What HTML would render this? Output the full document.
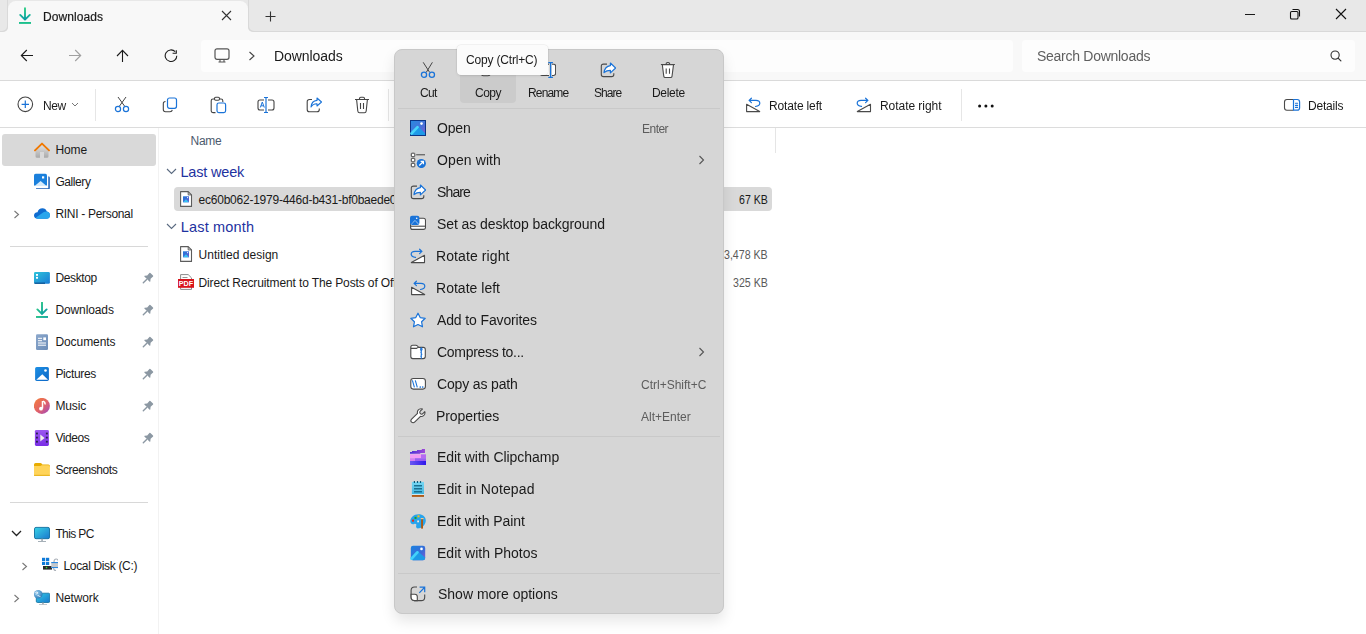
<!DOCTYPE html>
<html><head><meta charset="utf-8"><style>
html,body{margin:0;padding:0;width:1366px;height:634px;overflow:hidden;background:#fff;font-family:"Liberation Sans", sans-serif;}
.t{position:absolute;white-space:nowrap;}
.r{position:absolute;}
</style></head><body>
<div class="r" style="left:0px;top:0px;width:1366px;height:32px;background:#f8f8f8;"></div><div class="r" style="left:0px;top:0px;width:1366px;height:1px;background:#e8e8e8;"></div><div class="r" style="left:0px;top:0px;width:8px;height:32px;background:#e8e8e8;border-bottom-right-radius:5px;box-shadow:inset -1px -1px 0 #d9d9d9"></div><div class="r" style="left:248px;top:0px;width:1118px;height:32px;background:#e8e8e8;border-bottom-left-radius:5px;box-shadow:inset 1px -1px 0 #d9d9d9"></div><div class="r" style="left:8px;top:1px;width:240px;height:31px;background:#f8f8f8;border-radius:8px 8px 0 0"></div><div class="r" style="left:8px;top:1px;width:7px;height:7px;background:#e8e8e8;z-index:0"></div><div class="r" style="left:241px;top:1px;width:7px;height:7px;background:#e8e8e8;z-index:0"></div><div class="r" style="left:8px;top:1px;width:240px;height:31px;background:#f8f8f8;border-radius:8px 8px 0 0"></div><svg class="r" style="left:18px;top:7px" width="14" height="18" viewBox="0 0 14 18"><defs><linearGradient id="dg" x1="0" y1="0" x2="0" y2="1"><stop offset="0" stop-color="#2ccc84"/><stop offset="0.6" stop-color="#18b49a"/><stop offset="1" stop-color="#0a9aa2"/></linearGradient></defs><path d="M7 1.2 V12.6 M2.2 7.9 L7 12.7 L11.8 7.9" stroke="url(#dg)" stroke-width="1.9" fill="none" stroke-linecap="round" stroke-linejoin="round"/><rect x="1" y="15" width="12" height="1.9" fill="#1cc08c"/></svg><div class="t" style="left:43.30px;top:7.00px;font-size:12px;line-height:20px;color:#1a1a1a;letter-spacing:0.092px;-webkit-text-stroke:0.2px #1a1a1a;will-change:transform;">Downloads</div><svg class="r" style="left:221px;top:10px" width="11" height="11" viewBox="0 0 11 11"><path d="M1 1 L10 10 M10 1 L1 10" stroke="#333" stroke-width="1.1"/></svg><svg class="r" style="left:265px;top:11px" width="11" height="11" viewBox="0 0 11 11"><path d="M5.5 0.5 V10.5 M0.5 5.5 H10.5" stroke="#333" stroke-width="1.1"/></svg><div class="r" style="left:1245px;top:14px;width:10px;height:1px;background:#1a1a1a;"></div><svg class="r" style="left:1289px;top:8px" width="12" height="12" viewBox="0 0 12 12"><rect x="1.5" y="3.5" width="7.5" height="7.5" rx="1.3" fill="none" stroke="#111" stroke-width="1.1"/><path d="M3.5 1.5 H8.5 Q10.5 1.5 10.5 3.5 V8.5" fill="none" stroke="#111" stroke-width="1.1"/></svg><svg class="r" style="left:1335px;top:8px" width="12" height="12" viewBox="0 0 12 12"><path d="M1 1 L11 11 M11 1 L1 11" stroke="#111" stroke-width="1.1"/></svg><div class="r" style="left:0px;top:32px;width:1366px;height:48px;background:#f8f8f8;"></div><div class="r" style="left:0px;top:80px;width:1366px;height:1px;background:#dadada;"></div><svg class="r" style="left:20px;top:49px" width="14" height="13" viewBox="0 0 14 13"><path d="M13 6.5 H1.5 M6.8 1 L1.3 6.5 L6.8 12" stroke="#1a1a1a" stroke-width="1.1" fill="none"/></svg><svg class="r" style="left:68px;top:49px" width="14" height="13" viewBox="0 0 14 13"><path d="M1 6.5 H12.5 M7.2 1 L12.7 6.5 L7.2 12" stroke="#a0a0a0" stroke-width="1.1" fill="none"/></svg><svg class="r" style="left:116px;top:49px" width="13" height="14" viewBox="0 0 13 14"><path d="M6.5 13 V1.5 M1 7 L6.5 1.3 L12 7" stroke="#1a1a1a" stroke-width="1.1" fill="none"/></svg><svg class="r" style="left:164px;top:49px" width="14" height="14" viewBox="0 0 14 14"><path d="M12.8 6.7 A5.8 5.8 0 1 1 11.2 2.7" stroke="#1a1a1a" stroke-width="1.1" fill="none"/><path d="M12.3 1.2 V4.2 H8.6" stroke="#1a1a1a" stroke-width="1.1" fill="none"/></svg><div class="r" style="left:201px;top:40px;width:812px;height:32px;background:#fdfdfd;border-radius:4px"></div><svg class="r" style="left:214px;top:48px" width="16" height="15" viewBox="0 0 16 15"><rect x="1" y="0.8" width="14" height="10.5" rx="2" fill="none" stroke="#555" stroke-width="1.2"/><path d="M4.5 14 H11.5 M6 11.5 V14 M10 11.5 V14" stroke="#555" stroke-width="1.1"/></svg><svg class="r" style="left:248px;top:51px" width="8" height="10" viewBox="0 0 8 10"><path d="M1.5 1 L6 5 L1.5 9" stroke="#444" stroke-width="1.1" fill="none"/></svg><div class="t" style="left:273.80px;top:46.00px;font-size:14px;line-height:20px;color:#1a1a1a;letter-spacing:-0.058px;will-change:transform;">Downloads</div><div class="r" style="left:1022px;top:40px;width:333px;height:32px;background:#fdfdfd;border-radius:4px"></div><div class="t" style="left:1037.20px;top:46.00px;font-size:14px;line-height:20px;color:#5f5f5f;letter-spacing:-0.274px;will-change:transform;">Search Downloads</div><svg class="r" style="left:1329px;top:49px" width="14" height="14" viewBox="0 0 14 14"><circle cx="6.1" cy="6.1" r="4.1" fill="none" stroke="#333" stroke-width="1.1"/><path d="M9.1 9.1 L11.9 11.9" stroke="#333" stroke-width="1.2" stroke-linecap="round"/></svg><div class="r" style="left:0px;top:81px;width:1366px;height:46px;background:#ffffff;"></div><div class="r" style="left:0px;top:127px;width:1366px;height:1px;background:#dcdcdc;"></div><svg class="r" style="left:17px;top:96px" width="17" height="17" viewBox="0 0 17 17"><circle cx="8.3" cy="8.3" r="7.3" fill="none" stroke="#444" stroke-width="1.1"/><path d="M8.3 4.6 V12 M4.6 8.3 H12" stroke="#1a73d8" stroke-width="1.2"/></svg><div class="t" style="left:42.50px;top:96.00px;font-size:12px;line-height:20px;color:#1a1a1a;letter-spacing:-0.470px;will-change:transform;">New</div><svg class="r" style="left:71px;top:102px" width="8" height="6" viewBox="0 0 8 6"><path d="M1 1 L4 4 L7 1" stroke="#777" stroke-width="1" fill="none"/></svg><div class="r" style="left:95px;top:89px;width:1px;height:32px;background:#e6e6e6;"></div><svg class="r" style="left:114px;top:96px" width="16" height="17" viewBox="0 0 16 17"><path d="M4 1 L10.5 10 M12 1 L5.5 10" stroke="#444" stroke-width="1" fill="none"/><circle cx="4" cy="13" r="2.6" fill="none" stroke="#1a73d8" stroke-width="1.2"/><circle cx="12" cy="13" r="2.6" fill="none" stroke="#1a73d8" stroke-width="1.2"/></svg><svg class="r" style="left:162px;top:97px" width="16" height="16" viewBox="0 0 16 16"><path d="M3.5 4.5 Q1.3 4.5 1.3 6.8 V12.5 Q1.3 14.7 3.5 14.7 H8 Q10 14.7 10.3 12.8" stroke="#444" stroke-width="1.1" fill="none"/><rect x="5.5" y="1" width="9" height="10.3" rx="2" fill="none" stroke="#1a73d8" stroke-width="1.2"/></svg><svg class="r" style="left:210px;top:96px" width="17" height="18" viewBox="0 0 17 18"><path d="M4.5 3 H3 Q1.2 3 1.2 4.8 V15 Q1.2 16.6 3 16.6 H5.5 M9.5 3 H11 Q12.8 3 12.8 4.8 V6" stroke="#444" stroke-width="1.1" fill="none"/><rect x="4.5" y="1.2" width="5" height="3" rx="1.2" fill="none" stroke="#444" stroke-width="1.1"/><rect x="7" y="7" width="8.6" height="9.6" rx="1.8" fill="none" stroke="#1a73d8" stroke-width="1.2"/></svg><svg class="r" style="left:257px;top:96px" width="18" height="18" viewBox="0 0 18 18"><path d="M7 4 H3 Q1 4 1 6 V12 Q1 14 3 14 H7 M11 4 H15 Q17 4 17 6 V12 Q17 14 15 14 H11" stroke="#444" stroke-width="1.1" fill="none"/><path d="M9 1.5 V16.5 M7 1.5 H11 M7 16.5 H11" stroke="#1a73d8" stroke-width="1.2"/><path d="M3.3 11.5 L5.3 6 L7.3 11.5 M4 9.8 H6.6" stroke="#1a73d8" stroke-width="1" fill="none"/></svg><svg class="r" style="left:306px;top:97px" width="17" height="16" viewBox="0 0 17 16"><path d="M6 2.5 H3.5 Q1.2 2.5 1.2 4.8 V12.5 Q1.2 14.8 3.5 14.8 H11 Q13.3 14.8 13.3 12.5 V11.5" stroke="#444" stroke-width="1.1" fill="none"/><path d="M11 1 L15.5 5 L11 9 V6.7 Q7 6.5 5 10 Q5.5 4 11 3.4 Z" stroke="#1a73d8" stroke-width="1.1" fill="none" stroke-linejoin="round"/></svg><svg class="r" style="left:354px;top:96px" width="16" height="18" viewBox="0 0 16 18"><path d="M1 3.5 H15 M5.5 3.5 V2.5 Q5.5 1.2 6.8 1.2 H9.2 Q10.5 1.2 10.5 2.5 V3.5" stroke="#444" stroke-width="1.1" fill="none"/><path d="M2.6 3.5 L3.8 15 Q4 16.7 5.6 16.7 H10.4 Q12 16.7 12.2 15 L13.4 3.5" stroke="#444" stroke-width="1.1" fill="none"/><path d="M6.5 7 V13 M9.5 7 V13" stroke="#444" stroke-width="1.1"/></svg><div class="r" style="left:388px;top:89px;width:1px;height:32px;background:#e6e6e6;"></div><svg class="r" style="left:745px;top:97px" width="16" height="16" viewBox="0 0 16 16"><path d="M1.6 7.3 V14.6 H14.7 Z" fill="#fff" stroke="#4a4a4a" stroke-width="1.1" stroke-linejoin="round"/><path d="M10.5 9.5 Q14.8 8.8 14.8 6.3 Q14.8 3.5 11 3.4 H4.2 M6.4 1.2 L4.1 3.4 L6.4 5.6" stroke="#1a73d8" stroke-width="1.2" fill="none" stroke-linecap="round" stroke-linejoin="round"/></svg><div class="t" style="left:769.40px;top:96.00px;font-size:12px;line-height:20px;color:#1a1a1a;letter-spacing:-0.156px;will-change:transform;">Rotate left</div><svg class="r" style="left:856px;top:97px" width="16" height="16" viewBox="0 0 16 16"><path d="M1.3 14.6 H14.5 V7.2 Z" fill="#fff" stroke="#4a4a4a" stroke-width="1.1" stroke-linejoin="round"/><path d="M5.5 9.4 Q1.2 8.8 1.2 6.3 Q1.2 3.5 5 3.4 H11.8 M9.6 1.2 L11.9 3.4 L9.6 5.6" stroke="#1a73d8" stroke-width="1.2" fill="none" stroke-linecap="round" stroke-linejoin="round"/></svg><div class="t" style="left:880.30px;top:96.00px;font-size:12px;line-height:20px;color:#1a1a1a;letter-spacing:-0.045px;will-change:transform;">Rotate right</div><div class="r" style="left:961px;top:89px;width:1px;height:32px;background:#e6e6e6;"></div><svg class="r" style="left:977px;top:103px" width="18" height="6" viewBox="0 0 18 6"><circle cx="2.6" cy="2.9" r="1.5" fill="#111"/><circle cx="8.9" cy="2.9" r="1.5" fill="#111"/><circle cx="15.2" cy="2.9" r="1.5" fill="#111"/></svg><svg class="r" style="left:1283px;top:97px" width="18" height="15" viewBox="0 0 18 15"><path d="M10.5 2.5 H4 Q1.5 2.5 1.5 5 V10.7 Q1.5 13.2 4 13.2 H10.5" stroke="#4a4a4a" stroke-width="1.1" fill="none"/><path d="M10.5 2.5 H14.2 Q16.6 2.5 16.6 5 V10.7 Q16.6 13.2 14.2 13.2 H10.5 Z" stroke="#1a73d8" stroke-width="1.2" fill="none"/><path d="M12.5 6.3 H14.6 M12.5 8.4 H14.6 M12.5 10.4 H14.6" stroke="#1a73d8" stroke-width="1.1" stroke-linecap="round"/></svg><div class="t" style="left:1308.10px;top:96.00px;font-size:12px;line-height:20px;color:#1a1a1a;letter-spacing:-0.213px;will-change:transform;">Details</div><div class="r" style="left:158px;top:128px;width:1px;height:506px;background:#f2f2f2;"></div><div class="r" style="left:2px;top:134px;width:154px;height:32px;background:#d9d9d9;border-radius:3px"></div><div class="t" style="left:55.40px;top:140.00px;font-size:12px;line-height:20px;color:#1a1a1a;letter-spacing:-0.079px;">Home</div><div class="t" style="left:55.40px;top:172.00px;font-size:12px;line-height:20px;color:#1a1a1a;letter-spacing:-0.418px;">Gallery</div><div class="t" style="left:55.40px;top:204.00px;font-size:12px;line-height:20px;color:#1a1a1a;letter-spacing:-0.304px;">RINI - Personal</div><svg class="r" style="left:13px;top:210px" width="7" height="9" viewBox="0 0 7 9"><path d="M1.5 1 L5.5 4.5 L1.5 8" stroke="#777" stroke-width="1.1" fill="none"/></svg><div class="t" style="left:55.40px;top:268.00px;font-size:12px;line-height:20px;color:#1a1a1a;letter-spacing:-0.358px;">Desktop</div><svg class="r" style="left:142px;top:272px" width="12" height="12" viewBox="0 0 12 12"><path d="M7.4 0.9 Q7.9 0.6 8.4 1 L11 3.6 Q11.4 4.1 11.1 4.6 L8.6 6.8 L8.3 9.4 Q8 10.1 7.4 9.6 L2.4 4.6 Q1.9 4 2.6 3.7 L5.2 3.4 Z" fill="#8c98a3"/><path d="M4.6 7.4 L1.3 10.7" stroke="#8c98a3" stroke-width="1.4" stroke-linecap="round"/></svg><div class="t" style="left:55.40px;top:300.00px;font-size:12px;line-height:20px;color:#1a1a1a;letter-spacing:-0.108px;">Downloads</div><svg class="r" style="left:142px;top:304px" width="12" height="12" viewBox="0 0 12 12"><path d="M7.4 0.9 Q7.9 0.6 8.4 1 L11 3.6 Q11.4 4.1 11.1 4.6 L8.6 6.8 L8.3 9.4 Q8 10.1 7.4 9.6 L2.4 4.6 Q1.9 4 2.6 3.7 L5.2 3.4 Z" fill="#8c98a3"/><path d="M4.6 7.4 L1.3 10.7" stroke="#8c98a3" stroke-width="1.4" stroke-linecap="round"/></svg><div class="t" style="left:55.40px;top:332.00px;font-size:12px;line-height:20px;color:#1a1a1a;letter-spacing:-0.061px;">Documents</div><svg class="r" style="left:142px;top:336px" width="12" height="12" viewBox="0 0 12 12"><path d="M7.4 0.9 Q7.9 0.6 8.4 1 L11 3.6 Q11.4 4.1 11.1 4.6 L8.6 6.8 L8.3 9.4 Q8 10.1 7.4 9.6 L2.4 4.6 Q1.9 4 2.6 3.7 L5.2 3.4 Z" fill="#8c98a3"/><path d="M4.6 7.4 L1.3 10.7" stroke="#8c98a3" stroke-width="1.4" stroke-linecap="round"/></svg><div class="t" style="left:55.40px;top:364.00px;font-size:12px;line-height:20px;color:#1a1a1a;letter-spacing:-0.350px;">Pictures</div><svg class="r" style="left:142px;top:368px" width="12" height="12" viewBox="0 0 12 12"><path d="M7.4 0.9 Q7.9 0.6 8.4 1 L11 3.6 Q11.4 4.1 11.1 4.6 L8.6 6.8 L8.3 9.4 Q8 10.1 7.4 9.6 L2.4 4.6 Q1.9 4 2.6 3.7 L5.2 3.4 Z" fill="#8c98a3"/><path d="M4.6 7.4 L1.3 10.7" stroke="#8c98a3" stroke-width="1.4" stroke-linecap="round"/></svg><div class="t" style="left:55.40px;top:396.00px;font-size:12px;line-height:20px;color:#1a1a1a;letter-spacing:-0.109px;">Music</div><svg class="r" style="left:142px;top:400px" width="12" height="12" viewBox="0 0 12 12"><path d="M7.4 0.9 Q7.9 0.6 8.4 1 L11 3.6 Q11.4 4.1 11.1 4.6 L8.6 6.8 L8.3 9.4 Q8 10.1 7.4 9.6 L2.4 4.6 Q1.9 4 2.6 3.7 L5.2 3.4 Z" fill="#8c98a3"/><path d="M4.6 7.4 L1.3 10.7" stroke="#8c98a3" stroke-width="1.4" stroke-linecap="round"/></svg><div class="t" style="left:55.40px;top:428.00px;font-size:12px;line-height:20px;color:#1a1a1a;letter-spacing:-0.435px;">Videos</div><svg class="r" style="left:142px;top:432px" width="12" height="12" viewBox="0 0 12 12"><path d="M7.4 0.9 Q7.9 0.6 8.4 1 L11 3.6 Q11.4 4.1 11.1 4.6 L8.6 6.8 L8.3 9.4 Q8 10.1 7.4 9.6 L2.4 4.6 Q1.9 4 2.6 3.7 L5.2 3.4 Z" fill="#8c98a3"/><path d="M4.6 7.4 L1.3 10.7" stroke="#8c98a3" stroke-width="1.4" stroke-linecap="round"/></svg><div class="t" style="left:55.40px;top:460.00px;font-size:12px;line-height:20px;color:#1a1a1a;letter-spacing:-0.440px;">Screenshots</div><div class="r" style="left:10px;top:246px;width:138px;height:1px;background:#d8d8d8;"></div><div class="r" style="left:10px;top:502px;width:138px;height:1px;background:#d8d8d8;"></div><div class="t" style="left:55.40px;top:524.00px;font-size:12px;line-height:20px;color:#1a1a1a;letter-spacing:-0.618px;">This PC</div><div class="t" style="left:63.50px;top:556.00px;font-size:12px;line-height:20px;color:#1a1a1a;letter-spacing:-0.342px;">Local Disk (C:)</div><div class="t" style="left:55.40px;top:588.00px;font-size:12px;line-height:20px;color:#1a1a1a;letter-spacing:-0.118px;">Network</div><svg class="r" style="left:11px;top:530px" width="11" height="7" viewBox="0 0 11 7"><path d="M1 1 L5.5 5.5 L10 1" stroke="#222" stroke-width="1.3" fill="none"/></svg><svg class="r" style="left:21px;top:562px" width="7" height="9" viewBox="0 0 7 9"><path d="M1.5 1 L5.5 4.5 L1.5 8" stroke="#777" stroke-width="1.1" fill="none"/></svg><svg class="r" style="left:13px;top:594px" width="7" height="9" viewBox="0 0 7 9"><path d="M1.5 1 L5.5 4.5 L1.5 8" stroke="#777" stroke-width="1.1" fill="none"/></svg><div class="t" style="left:190.50px;top:131.00px;font-size:12px;line-height:20px;color:#4c5a6e;letter-spacing:-0.279px;">Name</div><div class="r" style="left:775px;top:128px;width:1px;height:25px;background:#e5e5e5;"></div><svg class="r" style="left:166px;top:168px" width="11" height="7" viewBox="0 0 11 7"><path d="M1 1 L5.5 5.5 L10 1" stroke="#5a6a80" stroke-width="1.1" fill="none"/></svg><div class="t" style="left:180.50px;top:162.00px;font-size:14.5px;line-height:20px;color:#1e32a0;letter-spacing:-0.192px;">Last week</div><div class="r" style="left:174px;top:187px;width:598px;height:24px;background:#d9d9d9;border-radius:4px"></div><div class="t" style="left:198.60px;top:190.00px;font-size:12px;line-height:20px;color:#1a1a1a;letter-spacing:-0.237px;">ec60b062-1979-446d-b431-bf0baede0c1a</div><div class="t" style="left:738.90px;top:190.00px;font-size:12px;line-height:20px;color:#1a1a1a;letter-spacing:0.000px;transform:scaleX(0.8811);transform-origin:0 0;">67 KB</div><svg class="r" style="left:166px;top:223px" width="11" height="7" viewBox="0 0 11 7"><path d="M1 1 L5.5 5.5 L10 1" stroke="#5a6a80" stroke-width="1.1" fill="none"/></svg><div class="t" style="left:180.80px;top:217.00px;font-size:14.5px;line-height:20px;color:#1e32a0;letter-spacing:0.159px;">Last month</div><div class="t" style="left:198.50px;top:245.00px;font-size:12px;line-height:20px;color:#1a1a1a;letter-spacing:0.028px;">Untitled design</div><div class="t" style="left:724.05px;top:245.00px;font-size:12px;line-height:20px;color:#5a5a5a;letter-spacing:0.000px;transform:scaleX(0.8842);transform-origin:0 0;">3,478 KB</div><div class="t" style="left:198.50px;top:273.00px;font-size:12px;line-height:20px;color:#1a1a1a;letter-spacing:-0.120px;">Direct Recruitment to The Posts of Officers</div><div class="t" style="left:732.90px;top:273.00px;font-size:12px;line-height:20px;color:#5a5a5a;letter-spacing:0.000px;transform:scaleX(0.8842);transform-origin:0 0;">325 KB</div><svg class="r" style="left:34px;top:142px" width="16" height="16" viewBox="0 0 16 16"><defs><linearGradient id="hg" x1="0" y1="0" x2="0" y2="1"><stop offset="0" stop-color="#e2e2e2"/><stop offset="1" stop-color="#a9a9a9"/></linearGradient></defs><path d="M1.5 8.5 L8 2.6 L14.5 8.5 V14.3 Q14.5 15.8 13 15.8 H10 V10 H6 V15.8 H3 Q1.5 15.8 1.5 14.3 Z" fill="url(#hg)"/><path d="M1 8.4 L8 1.6 L15 8.4" stroke="#f07800" stroke-width="1.9" fill="none" stroke-linecap="round" stroke-linejoin="round"/></svg><svg class="r" style="left:34px;top:173px" width="16" height="16" viewBox="0 0 16 16"><path d="M14.3 3.2 Q15.8 3.2 15.8 4.7 V15 Q15.8 16.6 14.3 16.6 H3.5 Q2 16.6 2 15.2 H14.3 Z" fill="#1c5fb5"/><rect x="0" y="0.8" width="13" height="12.3" rx="1.6" fill="#1a80dc"/><path d="M0.6 13.1 L6.6 8 L12.6 13.1 Z" fill="#d6ebfb"/><rect x="8" y="3.3" width="2.2" height="2.2" fill="#fff"/></svg><svg class="r" style="left:34px;top:206px" width="16" height="16" viewBox="0 0 16 16"><path d="M3.8 12.7 Q0 12.7 0 9.6 Q0 6.6 3.5 6.3 Q4.5 2.3 8.6 2.3 Q11.6 2.3 12.8 5.4 Q15.9 5.8 15.9 9.2 Q15.9 12.7 12.3 12.7 Z" fill="#0f6cd0"/><path d="M2 11.5 L9.8 6.1 Q11 5.6 12.8 5.4 Q15.9 5.8 15.9 9.2 Q15.9 12.7 12.3 12.7 H3.8 Q2.6 12.7 2 11.5 Z" fill="#2aa6ec"/></svg><svg class="r" style="left:34px;top:270px" width="16" height="16" viewBox="0 0 16 16"><defs><linearGradient id="dsk" x1="0" y1="0" x2="1" y2="1"><stop offset="0" stop-color="#2ec4da"/><stop offset="1" stop-color="#1a7bd6"/></linearGradient></defs><rect x="0" y="1.9" width="15.9" height="11.9" rx="1.4" fill="url(#dsk)"/><rect x="0.5" y="12.6" width="10.5" height="1.2" fill="#0b4f8e"/><rect x="2" y="4" width="2" height="1.8" fill="#fff"/><rect x="2" y="6.9" width="2" height="1.8" fill="#fff"/></svg><svg class="r" style="left:34px;top:302px" width="16" height="16" viewBox="0 0 16 16"><defs><linearGradient id="dg2" x1="0" y1="0" x2="1" y2="1"><stop offset="0" stop-color="#30d080"/><stop offset="1" stop-color="#0a98a8"/></linearGradient></defs><path d="M8 0.5 V12 M3.4 7.4 L8 12 L12.6 7.4" stroke="url(#dg2)" stroke-width="1.9" fill="none" stroke-linecap="round"/><rect x="2" y="14" width="12" height="1.9" fill="url(#dg2)"/></svg><svg class="r" style="left:34px;top:334px" width="16" height="16" viewBox="0 0 16 16"><defs><linearGradient id="doc" x1="0" y1="0" x2="1" y2="1"><stop offset="0" stop-color="#8ca8cc"/><stop offset="1" stop-color="#6c8db8"/></linearGradient></defs><rect x="2" y="0.2" width="12" height="15.7" rx="1.2" fill="url(#doc)"/><rect x="4" y="3.8" width="4" height="1" fill="#fff"/><rect x="4" y="6.2" width="4" height="1" fill="#fff"/><rect x="4" y="8.5" width="8" height="1" fill="#fff"/><rect x="4" y="10.7" width="8" height="1" fill="#fff"/><rect x="9.3" y="3.4" width="2.7" height="2.8" fill="#fff"/></svg><svg class="r" style="left:34px;top:366px" width="16" height="16" viewBox="0 0 16 16"><defs><linearGradient id="pic" x1="0" y1="0" x2="1" y2="1"><stop offset="0" stop-color="#1e90e4"/><stop offset="1" stop-color="#0b66c6"/></linearGradient></defs><rect x="1.1" y="0.9" width="13.8" height="14" rx="1.6" fill="url(#pic)"/><path d="M2.3 13.8 L8.3 8.2 L14 13.8 Z" fill="#fff"/><circle cx="11.5" cy="4.5" r="1.3" fill="#fff"/></svg><svg class="r" style="left:34px;top:398px" width="16" height="16" viewBox="0 0 16 16"><defs><linearGradient id="mus" x1="0" y1="0" x2="1" y2="1"><stop offset="0" stop-color="#f58038"/><stop offset="0.55" stop-color="#e0606a"/><stop offset="1" stop-color="#9a48c8"/></linearGradient></defs><circle cx="7.9" cy="7.9" r="8" fill="url(#mus)"/><path d="M8.5 3 V10.5" stroke="#fff" stroke-width="1.5"/><circle cx="7" cy="10.7" r="1.9" fill="#fff"/><path d="M9 3.2 Q11.5 4 11 6.5" stroke="#fff" stroke-width="1.4" fill="none"/></svg><svg class="r" style="left:34px;top:430px" width="16" height="16" viewBox="0 0 16 16"><defs><linearGradient id="vid" x1="0" y1="0" x2="0" y2="1"><stop offset="0" stop-color="#9b58f0"/><stop offset="1" stop-color="#7a2ee6"/></linearGradient></defs><rect x="0.9" y="0" width="14" height="15.9" rx="1.3" fill="url(#vid)"/><rect x="2" y="2.6" width="1.9" height="1.8" fill="#2a2050"/><rect x="2" y="6.7" width="1.9" height="1.8" fill="#2a2050"/><rect x="2" y="10.8" width="1.9" height="1.8" fill="#2a2050"/><rect x="11.9" y="2.6" width="1.9" height="1.8" fill="#2a2050"/><rect x="11.9" y="6.7" width="1.9" height="1.8" fill="#2a2050"/><rect x="11.9" y="10.8" width="1.9" height="1.8" fill="#2a2050"/><path d="M6.3 4.4 L10.6 8 L6.3 11.6 Z" fill="#f0f0e8"/></svg><svg class="r" style="left:34px;top:462px" width="16" height="16" viewBox="0 0 16 16"><path d="M0 2.6 Q0 0.9 1.6 0.9 H6.4 Q7.3 0.9 7.8 1.7 L8.4 2.6 H14.4 Q15.9 2.6 15.9 4.1 V5 H0 Z" fill="#e8ac00"/><path d="M0 4.1 H6.3 L7.8 3.2 H14.4 Q15.9 3.2 15.9 4.7 V12.4 Q15.9 13.9 14.4 13.9 H1.5 Q0 13.9 0 12.4 Z" fill="#ffd45a"/><rect x="0" y="12.8" width="15.9" height="1.1" fill="#e8b420"/></svg><svg class="r" style="left:34px;top:526px" width="16" height="16" viewBox="0 0 16 16"><defs><linearGradient id="pc" x1="0" y1="0" x2="1" y2="1"><stop offset="0" stop-color="#38d4e6"/><stop offset="1" stop-color="#1a78ce"/></linearGradient></defs><rect x="0.5" y="1.4" width="15" height="11.3" rx="1.5" fill="url(#pc)" stroke="#0e6e9e" stroke-width="0.9"/><rect x="7.3" y="12.7" width="1.5" height="2.4" fill="#9aa4ac"/><rect x="4" y="15" width="8" height="1" fill="#a6b0b8"/></svg><svg class="r" style="left:42px;top:557px" width="16" height="16" viewBox="0 0 16 16"><rect x="0" y="0.8" width="3.2" height="3.2" fill="#0f7ad8"/><rect x="4" y="0.8" width="3.2" height="3.2" fill="#0f7ad8"/><rect x="0" y="4.8" width="3.2" height="3.2" fill="#0f7ad8"/><rect x="4" y="4.8" width="3.2" height="3.2" fill="#0f7ad8"/><rect x="1" y="9" width="9" height="3.6" fill="#2a2a2a"/><circle cx="4.5" cy="10.6" r="0.8" fill="#3ae03a"/><path d="M12 5 Q12 2 14.2 2 Q15.6 2 16 3.5" stroke="#aab0b8" stroke-width="1.2" fill="none"/><rect x="9.3" y="5" width="6.8" height="6" fill="#c4c8cc"/><rect x="9.3" y="5" width="6.8" height="1.1" fill="#2a88e0"/><rect x="9.3" y="10" width="6.8" height="1.1" fill="#2a88e0"/><path d="M11.5 11 Q12 13.8 14 13.3" stroke="#aab0b8" stroke-width="1.2" fill="none"/></svg><svg class="r" style="left:34px;top:589px" width="16" height="16" viewBox="0 0 16 16"><defs><linearGradient id="nw" x1="0" y1="0" x2="1" y2="1"><stop offset="0" stop-color="#30cce4"/><stop offset="1" stop-color="#1a78ce"/></linearGradient><radialGradient id="gl" cx="0.35" cy="0.35" r="0.7"><stop offset="0" stop-color="#9fd0f0"/><stop offset="1" stop-color="#2a7ab8"/></radialGradient></defs><rect x="2.3" y="4.2" width="13.4" height="9.3" rx="1.2" fill="url(#nw)" stroke="#0e6e9e" stroke-width="0.8"/><rect x="8.2" y="13.5" width="1.5" height="1.8" fill="#9aa4ac"/><rect x="5" y="15.3" width="8" height="1" fill="#a6b0b8"/><circle cx="4.2" cy="5.2" r="4.3" fill="url(#gl)"/><path d="M1.3 3.5 Q3 2.5 4 3.8 Q3 5 1.6 5.2 M3.5 6.6 Q5.5 6.3 6.5 8.2" stroke="#e0f0fa" stroke-width="1" fill="none"/></svg><svg class="r" style="left:178px;top:191px" width="16" height="16" viewBox="0 0 16 16"><path d="M2.6 0.6 H10.2 L13.5 3.9 V15.4 H2.6 Z" fill="#fff" stroke="#5c5c5c" stroke-width="1.1" stroke-linejoin="round"/><path d="M10.2 0.6 V3.9 H13.5" fill="none" stroke="#5c5c5c" stroke-width="1"/><defs><linearGradient id="fim" x1="0" y1="0" x2="1" y2="1"><stop offset="0" stop-color="#1a78d8"/><stop offset="1" stop-color="#6a5ad0"/></linearGradient></defs><rect x="5" y="5.3" width="6" height="6" fill="url(#fim)"/><path d="M5 11.3 L8 8.2 L11 11.3 Z" fill="#36c4f4"/><circle cx="9.6" cy="6.6" r="0.6" fill="#fff"/></svg><svg class="r" style="left:178px;top:246px" width="16" height="16" viewBox="0 0 16 16"><path d="M2.6 0.6 H10.2 L13.5 3.9 V15.4 H2.6 Z" fill="#fff" stroke="#5c5c5c" stroke-width="1.1" stroke-linejoin="round"/><path d="M10.2 0.6 V3.9 H13.5" fill="none" stroke="#5c5c5c" stroke-width="1"/><defs><linearGradient id="fim" x1="0" y1="0" x2="1" y2="1"><stop offset="0" stop-color="#1a78d8"/><stop offset="1" stop-color="#6a5ad0"/></linearGradient></defs><rect x="5" y="5.3" width="6" height="6" fill="url(#fim)"/><path d="M5 11.3 L8 8.2 L11 11.3 Z" fill="#36c4f4"/><circle cx="9.6" cy="6.6" r="0.6" fill="#fff"/></svg><svg class="r" style="left:178px;top:274px" width="16" height="16" viewBox="0 0 16 16"><path d="M2.6 0.6 H10.2 L13.5 3.9 V15.4 H2.6 Z" fill="#fff" stroke="#8a8a8a" stroke-width="1" stroke-linejoin="round"/><rect x="4.5" y="3" width="5" height="0.9" fill="#8a8a8a"/><rect x="0" y="5" width="16" height="8.8" fill="#d8141c"/><text x="8" y="12.2" text-anchor="middle" font-family="Liberation Sans" font-weight="bold" font-size="7.2" fill="#fff">PDF</text></svg><div class="r" style="left:394px;top:49px;width:328px;height:563px;background:#d6d6d6;border:1px solid #c8c8c8;border-radius:8px;box-shadow:0 7px 14px rgba(0,0,0,0.10)"></div><div class="r" style="left:460px;top:55px;width:56px;height:48px;background:#cbcbcb;border-radius:4px"></div><div class="t" style="left:419.60px;top:83.00px;font-size:12px;line-height:20px;color:#1a1a1a;letter-spacing:-0.670px;will-change:transform;">Cut</div><div class="t" style="left:474.80px;top:83.00px;font-size:12px;line-height:20px;color:#1a1a1a;letter-spacing:-0.505px;will-change:transform;">Copy</div><div class="t" style="left:527.80px;top:83.00px;font-size:12px;line-height:20px;color:#1a1a1a;letter-spacing:-0.857px;will-change:transform;">Rename</div><div class="t" style="left:593.70px;top:83.00px;font-size:12px;line-height:20px;color:#1a1a1a;letter-spacing:-0.937px;will-change:transform;">Share</div><div class="t" style="left:652.00px;top:83.00px;font-size:12px;line-height:20px;color:#1a1a1a;letter-spacing:-0.323px;will-change:transform;">Delete</div><div class="r" style="left:398px;top:108px;width:322px;height:1px;background:#c9c9c9;"></div><div class="t" style="left:437.30px;top:118.00px;font-size:14px;line-height:20px;color:#1a1a1a;letter-spacing:-0.187px;will-change:transform;">Open</div><div class="t" style="left:437.30px;top:150.00px;font-size:14px;line-height:20px;color:#1a1a1a;letter-spacing:0.106px;will-change:transform;">Open with</div><div class="t" style="left:437.30px;top:182.00px;font-size:14px;line-height:20px;color:#1a1a1a;letter-spacing:-0.868px;will-change:transform;">Share</div><div class="t" style="left:437.30px;top:214.00px;font-size:14px;line-height:20px;color:#1a1a1a;letter-spacing:-0.070px;will-change:transform;">Set as desktop background</div><div class="t" style="left:436.30px;top:246.00px;font-size:14px;line-height:20px;color:#1a1a1a;letter-spacing:0.102px;will-change:transform;">Rotate right</div><div class="t" style="left:436.30px;top:278.00px;font-size:14px;line-height:20px;color:#1a1a1a;letter-spacing:0.018px;will-change:transform;">Rotate left</div><div class="t" style="left:437.30px;top:310.00px;font-size:14px;line-height:20px;color:#1a1a1a;letter-spacing:-0.129px;will-change:transform;">Add to Favorites</div><div class="t" style="left:437.30px;top:342.00px;font-size:14px;line-height:20px;color:#1a1a1a;letter-spacing:-0.295px;will-change:transform;">Compress to...</div><div class="t" style="left:437.30px;top:374.00px;font-size:14px;line-height:20px;color:#1a1a1a;letter-spacing:-0.146px;will-change:transform;">Copy as path</div><div class="t" style="left:436.30px;top:406.00px;font-size:14px;line-height:20px;color:#1a1a1a;letter-spacing:-0.067px;will-change:transform;">Properties</div><div class="t" style="left:641.60px;top:119.00px;font-size:12px;line-height:20px;color:#5c5c5c;letter-spacing:-0.521px;will-change:transform;">Enter</div><div class="t" style="left:641.30px;top:375.00px;font-size:12px;line-height:20px;color:#5c5c5c;letter-spacing:0.001px;will-change:transform;">Ctrl+Shift+C</div><div class="t" style="left:641.30px;top:407.00px;font-size:12px;line-height:20px;color:#5c5c5c;letter-spacing:0.000px;will-change:transform;">Alt+Enter</div><svg class="r" style="left:698px;top:155px" width="7" height="10" viewBox="0 0 7 10"><path d="M1.5 1 L5.5 5 L1.5 9" stroke="#555" stroke-width="1.1" fill="none"/></svg><svg class="r" style="left:698px;top:347px" width="7" height="10" viewBox="0 0 7 10"><path d="M1.5 1 L5.5 5 L1.5 9" stroke="#555" stroke-width="1.1" fill="none"/></svg><div class="r" style="left:398px;top:436px;width:322px;height:1px;background:#c9c9c9;"></div><div class="t" style="left:436.50px;top:447.00px;font-size:14px;line-height:20px;color:#1a1a1a;letter-spacing:-0.042px;will-change:transform;">Edit with Clipchamp</div><div class="t" style="left:436.50px;top:479.00px;font-size:14px;line-height:20px;color:#1a1a1a;letter-spacing:0.125px;will-change:transform;">Edit in Notepad</div><div class="t" style="left:436.50px;top:511.00px;font-size:14px;line-height:20px;color:#1a1a1a;letter-spacing:-0.059px;will-change:transform;">Edit with Paint</div><div class="t" style="left:436.50px;top:543.00px;font-size:14px;line-height:20px;color:#1a1a1a;letter-spacing:0.008px;will-change:transform;">Edit with Photos</div><div class="r" style="left:398px;top:573px;width:322px;height:1px;background:#c9c9c9;"></div><div class="t" style="left:437.50px;top:584.00px;font-size:14px;line-height:20px;color:#1a1a1a;letter-spacing:-0.003px;will-change:transform;">Show more options</div><svg class="r" style="left:420px;top:62px" width="16" height="16" viewBox="0 0 16 16"><path d="M3.2 0.3 L9.6 10.3 M12.4 0.3 L6.3 10.3" stroke="#454545" stroke-width="1" fill="none"/><circle cx="4" cy="12.75" r="2.6" fill="none" stroke="#1a73d8" stroke-width="1.3"/><circle cx="11.9" cy="12.75" r="2.6" fill="none" stroke="#1a73d8" stroke-width="1.3"/></svg><svg class="r" style="left:480px;top:61px" width="16" height="16" viewBox="0 0 16 16"><path d="M3.5 4.5 Q1.3 4.5 1.3 6.8 V12.5 Q1.3 14.7 3.5 14.7 H8 Q10 14.7 10.3 12.8" stroke="#4a4a4a" stroke-width="1.1" fill="none"/><rect x="5.5" y="1" width="9" height="10.3" rx="2" fill="none" stroke="#1a73d8" stroke-width="1.2"/></svg><svg class="r" style="left:540px;top:62px" width="16" height="16" viewBox="0 0 16 16"><path d="M9 2.2 H2.5 Q0.5 2.2 0.5 4.2 V11.5 Q0.5 13.5 2.5 13.5 H9 M12 2.2 H13.6 Q15.6 2.2 15.6 4.2 V11.5 Q15.6 13.5 13.6 13.5 H12" stroke="#4a4a4a" stroke-width="1.1" fill="#fff"/><path d="M10.6 0.6 V15.4 M8.3 0.6 H12.9 M8.3 15.4 H12.9" stroke="#1a73d8" stroke-width="1.2"/></svg><svg class="r" style="left:600px;top:62px" width="16" height="16" viewBox="0 0 16 16"><path d="M7 2.1 H3.5 Q1.3 2.1 1.3 4.3 V12.4 Q1.3 14.6 3.5 14.6 H11.6 Q13.8 14.6 13.8 12.4 V11.2" stroke="#4a4a4a" stroke-width="1.1" fill="none"/><path d="M10.4 1 L15.6 6 L10.4 10.9 V8.3 Q6.5 8.3 4 10.6 Q4.8 4.4 10.4 3.6 Z" stroke="#1a73d8" stroke-width="1.2" fill="#fff" stroke-linejoin="round"/></svg><svg class="r" style="left:660px;top:62px" width="16" height="16" viewBox="0 0 16 16"><path d="M2.3 2.7 L3.8 14.3 Q4 15.5 5.2 15.5 H10.6 Q11.8 15.5 12 14.3 L13.5 2.7 Z" stroke="#4a4a4a" stroke-width="1.1" fill="#fff"/><path d="M0.9 2.5 H14.9 M6 2.5 Q6 0.5 7.9 0.5 Q9.8 0.5 9.8 2.5 M6.2 6.4 V11.8 M9.5 6.4 V11.8" stroke="#4a4a4a" stroke-width="1.1" fill="none"/></svg><svg class="r" style="left:410px;top:120px" width="16" height="16" viewBox="0 0 16 16"><defs><linearGradient id="ph" x1="0" y1="0" x2="1" y2="1"><stop offset="0" stop-color="#2a8ae0"/><stop offset="0.6" stop-color="#4a70d8"/><stop offset="1" stop-color="#8a5ad0"/></linearGradient></defs><rect x="0" y="0" width="16" height="16" fill="#0b3585"/><rect x="1" y="1" width="14" height="14" fill="url(#ph)"/><path d="M1 12.5 L7.5 6 L15 13 V15 H1 Z" fill="#1e9ae8"/><path d="M1.5 13.5 L7.5 7.2" stroke="#48d4fa" stroke-width="2.6" stroke-linecap="round"/><circle cx="11.5" cy="3.6" r="1.3" fill="#fff"/></svg><svg class="r" style="left:410px;top:152px" width="16" height="16" viewBox="0 0 16 16"><rect x="1.3" y="1.2" width="3.5" height="3.5" rx="0.6" fill="#fff" stroke="#444" stroke-width="1"/><rect x="1.3" y="6.3" width="3.5" height="3.5" rx="0.6" fill="#fff" stroke="#444" stroke-width="1"/><rect x="1.3" y="11.3" width="3.5" height="3.5" rx="0.6" fill="#fff" stroke="#444" stroke-width="1"/><path d="M6.2 2.8 H15" stroke="#444" stroke-width="1"/><circle cx="11.3" cy="11.5" r="4.6" fill="#1a73d8"/><path d="M9.3 13.5 L13.2 9.6 M10.6 9.4 H13.4 V12.2" stroke="#fff" stroke-width="1.3" fill="none"/></svg><svg class="r" style="left:410px;top:184px" width="16" height="16" viewBox="0 0 16 16"><path d="M7 2.1 H3.5 Q1.3 2.1 1.3 4.3 V12.4 Q1.3 14.6 3.5 14.6 H11.6 Q13.8 14.6 13.8 12.4 V11.2" stroke="#4a4a4a" stroke-width="1.1" fill="none"/><path d="M10.4 1 L15.6 6 L10.4 10.9 V8.3 Q6.5 8.3 4 10.6 Q4.8 4.4 10.4 3.6 Z" stroke="#1a73d8" stroke-width="1.2" fill="#fff" stroke-linejoin="round"/></svg><svg class="r" style="left:410px;top:214px" width="16" height="16" viewBox="0 0 16 16"><rect x="0.6" y="4.3" width="14.9" height="11.1" rx="2" fill="#fff" stroke="#4a4a4a" stroke-width="1.1"/><path d="M0.6 12.2 H15.5" stroke="#4a4a4a" stroke-width="1.1"/><rect x="0" y="1.8" width="9.4" height="9.3" rx="2" fill="#1a73d8"/><path d="M1.3 10.4 L5 6.3 L8.4 10" stroke="#fff" stroke-width="0.8" fill="none" stroke-dasharray="1 0.6"/><circle cx="6.7" cy="4.3" r="0.8" fill="#fff"/></svg><svg class="r" style="left:410px;top:248px" width="16" height="16" viewBox="0 0 16 16"><path d="M1.3 14.6 H14.5 V7.2 Z" fill="#fff" stroke="#4a4a4a" stroke-width="1.1" stroke-linejoin="round"/><path d="M5.5 9.4 Q1.2 8.8 1.2 6.3 Q1.2 3.5 5 3.4 H11.8 M9.6 1.2 L11.9 3.4 L9.6 5.6" stroke="#1a73d8" stroke-width="1.2" fill="none" stroke-linecap="round" stroke-linejoin="round"/></svg><svg class="r" style="left:410px;top:280px" width="16" height="16" viewBox="0 0 16 16"><path d="M1.6 7.3 V14.6 H14.7 Z" fill="#fff" stroke="#4a4a4a" stroke-width="1.1" stroke-linejoin="round"/><path d="M10.5 9.5 Q14.8 8.8 14.8 6.3 Q14.8 3.5 11 3.4 H4.2 M6.4 1.2 L4.1 3.4 L6.4 5.6" stroke="#1a73d8" stroke-width="1.2" fill="none" stroke-linecap="round" stroke-linejoin="round"/></svg><svg class="r" style="left:410px;top:312px" width="16" height="16" viewBox="0 0 16 16"><path d="M8 1.2 L10.2 5.6 L15.2 6.3 L11.6 9.8 L12.5 14.8 L8 12.5 L3.5 14.8 L4.4 9.8 L0.8 6.3 L5.8 5.6 Z" fill="#fff" stroke="#1a73d8" stroke-width="1.2" stroke-linejoin="round"/></svg><svg class="r" style="left:410px;top:344px" width="16" height="16" viewBox="0 0 16 16"><path d="M0.8 3.2 Q0.8 1.2 2.8 1.2 H5.8 Q6.8 1.2 7.5 2 L8.6 3.4 H13.2 Q15.3 3.4 15.3 5.4 V12.6 Q15.3 14.6 13.2 14.6 H2.8 Q0.8 14.6 0.8 12.6 Z" fill="#fff" stroke="#4a4a4a" stroke-width="1.1"/><path d="M0.8 4.4 H6.5 L8 3.4" stroke="#4a4a4a" stroke-width="1.1" fill="none"/><path d="M11.3 3.4 V14.8 M10.3 8.2 H11.3 M11.3 10.2 H12.3 M10.3 12.2 H11.3" stroke="#1a73d8" stroke-width="1.1"/><rect x="10.5" y="4" width="1.6" height="2.6" rx="0.8" fill="none" stroke="#1a73d8" stroke-width="1"/></svg><svg class="r" style="left:410px;top:376px" width="16" height="16" viewBox="0 0 16 16"><rect x="0.8" y="2.5" width="14.6" height="10.6" rx="2.5" fill="#fff" stroke="#4a4a4a" stroke-width="1.1"/><path d="M2.4 4.3 L4.4 11.3 M5.3 4.3 L7.3 11.3" stroke="#1a73d8" stroke-width="1.1"/><circle cx="10.3" cy="11" r="0.85" fill="#1a73d8"/><circle cx="12.7" cy="11" r="0.85" fill="#1a73d8"/></svg><svg class="r" style="left:410px;top:408px" width="16" height="16" viewBox="0 0 16 16"><path d="M11 0.8 C8.6 0.8 6.9 3 7.5 5.3 L1.6 11.2 C0.8 12 0.8 13.4 1.6 14.2 C2.4 15 3.8 15 4.6 14.2 L10.5 8.3 C12.8 8.9 15 7.2 15 4.8 C15 4.4 14.9 4 14.8 3.6 L12.6 5.8 C11.9 6.3 10.8 6.2 10.3 5.5 C9.7 4.9 9.7 3.9 10.2 3.2 L12.4 1 C12 0.9 11.5 0.8 11 0.8 Z" fill="#fff" stroke="#4a4a4a" stroke-width="1.1" stroke-linejoin="round"/></svg><svg class="r" style="left:410px;top:449px" width="16" height="16" viewBox="0 0 16 16"><defs><linearGradient id="cc1" x1="0" y1="0" x2="1" y2="0"><stop offset="0" stop-color="#4a30d8"/><stop offset="1" stop-color="#a048d8"/></linearGradient><linearGradient id="cc3" x1="0" y1="0" x2="1" y2="0"><stop offset="0" stop-color="#6a58f2"/><stop offset="1" stop-color="#3018ea"/></linearGradient></defs><path d="M0 2.9 H2 V1.9 H7 V0.9 H11.8 V0 H15 V3.9 H10.3 V4.8 H0 Z" fill="url(#cc1)"/><rect x="0" y="5.3" width="11" height="3.9" fill="#f39cf6"/><rect x="11" y="5.3" width="5" height="3.9" fill="#b66af2"/><rect x="0" y="9.2" width="5" height="2.8" fill="#d47ef2"/><rect x="5" y="9.2" width="11" height="2.8" fill="#9a5ef2"/><rect x="0" y="12" width="16" height="4" fill="url(#cc3)"/></svg><svg class="r" style="left:410px;top:481px" width="16" height="16" viewBox="0 0 16 16"><defs><linearGradient id="np" x1="0" y1="0" x2="0" y2="1"><stop offset="0" stop-color="#78d8f4"/><stop offset="1" stop-color="#3ab0dc"/></linearGradient></defs><rect x="1.9" y="0.9" width="12.1" height="14" fill="url(#np)"/><rect x="1.9" y="13.3" width="12.1" height="0.8" fill="#fff"/><rect x="1.9" y="14" width="12.1" height="1.9" fill="#b05a18"/><rect x="3.8" y="0" width="1.2" height="2" fill="#0b5a7a"/><rect x="6.9" y="0" width="1.2" height="2" fill="#0b5a7a"/><rect x="9.9" y="0" width="1.2" height="2" fill="#0b5a7a"/><rect x="4" y="4.2" width="8" height="1.2" fill="#0b5a7a"/><rect x="4" y="7.2" width="8" height="1.2" fill="#0b5a7a"/><rect x="4" y="10.2" width="8" height="1.2" fill="#0b5a7a"/></svg><svg class="r" style="left:410px;top:513px" width="16" height="16" viewBox="0 0 16 16"><path d="M8.5 1.2 C3.5 1.2 0.3 4.5 0.3 8.3 C0.3 10.8 2.3 11.6 4.2 11 C5.8 10.5 6.8 11.2 6.2 12.8 C5.6 14.5 6.8 15.8 9 15.3 C13 14.3 15.8 11 15.8 7.4 C15.8 3.8 12.8 1.2 8.5 1.2 Z" fill="#28a4ec"/><rect x="2" y="6.6" width="2" height="2" fill="#f02a10"/><rect x="4.5" y="3.9" width="2" height="2" fill="#20a020"/><rect x="7.5" y="2.3" width="2" height="2" fill="#f8c010"/><rect x="7.2" y="7.5" width="1.8" height="1.8" fill="#fde8d8"/><path d="M10.3 5 H14 L13 6.2 H11.2 Z" fill="#f4c890"/><rect x="11.1" y="6.3" width="1.9" height="9.3" fill="#a85a18"/></svg><svg class="r" style="left:410px;top:545px" width="16" height="16" viewBox="0 0 16 16"><defs><linearGradient id="pa" x1="0" y1="0" x2="1" y2="1"><stop offset="0" stop-color="#1a84e0"/><stop offset="0.6" stop-color="#3a6ad8"/><stop offset="1" stop-color="#8a58d0"/></linearGradient></defs><rect x="0.8" y="0.8" width="14.4" height="14.4" rx="2.2" fill="url(#pa)"/><path d="M0.8 12 L7.3 6 L15.2 12.5 V13 Q15.2 15.2 13 15.2 H3 Q0.8 15.2 0.8 13 Z" fill="#1c9ae6"/><path d="M1.6 13.6 L7.3 7.4" stroke="#42d2fa" stroke-width="2.8" stroke-linecap="round"/><circle cx="11.5" cy="3.9" r="1.3" fill="#fff"/></svg><svg class="r" style="left:410px;top:586px" width="16" height="16" viewBox="0 0 16 16"><path d="M7 1 H4.5 Q1.1 1 1.1 4.5 V11.1 Q1.1 14.6 4.5 14.6 H11.2 Q14.7 14.6 14.7 11.2 V8.5" stroke="#4a4a4a" stroke-width="1.1" fill="none"/><path d="M1.1 8.3 H4.8 Q7.3 8.3 7.3 10.8 V14.6 H4.5 Q1.1 14.6 1.1 11.1 Z" fill="#fff" stroke="#4a4a4a" stroke-width="1.1"/><path d="M9.3 6.8 L14.5 1.5 M9.6 1.2 H14.7 V6.3" stroke="#1a73d8" stroke-width="1.2" fill="none"/></svg><div class="r" style="left:457px;top:45px;width:91px;height:30px;background:#fbfbfb;border-radius:4px;box-shadow:0 0 0 0.5px rgba(0,0,0,0.07), 0 1px 3px rgba(0,0,0,0.08)"></div><div class="t" style="left:466.10px;top:50.00px;font-size:12px;line-height:20px;color:#1a1a1a;letter-spacing:-0.182px;will-change:transform;">Copy (Ctrl+C)</div>
</body></html>
